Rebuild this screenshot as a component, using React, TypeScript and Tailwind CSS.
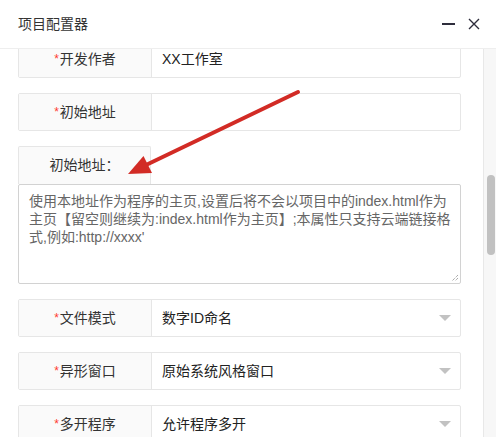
import type { ReactNode } from "react";

const font = {
  fontFamily: '"Liberation Sans", "Noto Sans CJK SC", sans-serif',
};

type RowProps = {
  label: string;
  required?: boolean;
  children?: ReactNode;
  select?: boolean;
};

function FormRow({ label, required = true, children, select }: RowProps) {
  return (
    <div className="mb-[15px] flex h-[38px] rounded-[2px] border border-[#e6e6e6] bg-white">
      <div className="flex w-[133px] shrink-0 items-center justify-center border-r border-[#e6e6e6] bg-[#fafafa] text-[14px] text-[#333]">
        {required && <span className="mr-[1px] text-[12px] text-[#ff3b30]">*</span>}
        {label}
      </div>
      <div className="relative flex flex-1 items-center pl-[10px] text-[14px] text-[#222]">
        {children}
        {select && (
          <span className="absolute right-[9px] top-[15px] h-0 w-0 border-x-[6px] border-t-[6px] border-x-transparent border-t-[#c2c2c2]" />
        )}
      </div>
    </div>
  );
}

export default function App() {
  return (
    <div
      className="relative flex h-[437px] w-[496px] flex-col overflow-hidden bg-white"
      style={font}
    >
      <header className="flex h-[49px] shrink-0 items-center justify-between border-b border-[#eee] pl-[18px] pr-[16px]">
        <span className="text-[14px] text-[#333]">项目配置器</span>
        <div className="flex items-center gap-[13px]">
          <span className="block h-[2px] w-[13px] bg-[#2e2d3c]" />
          <svg width="12" height="12" viewBox="0 0 12 12" aria-hidden="true">
            <path d="M1 1 L11 11 M11 1 L1 11" stroke="#2e2d3c" strokeWidth="1.4" />
          </svg>
        </div>
      </header>

      <div className="flex min-h-0 flex-1">
        <div className="min-w-0 flex-1 overflow-hidden">
          <div className="-mt-[9px] pl-[18px] pr-[22px]">
            <FormRow label="开发作者">XX工作室</FormRow>
            <FormRow label="初始地址" />

            <div className="flex h-[38px] w-[133px] items-center justify-center rounded-t-[2px] border border-b-0 border-[#e6e6e6] bg-[#fafafa] text-[14px] text-[#333]">
              初始地址：
            </div>
            <div className="relative mb-[15px] h-[100px] rounded-[2px] border border-[#d2d2d2] bg-white px-[10px] pt-[7px] text-[14px] leading-[18px] text-[#666]">
              <div className="whitespace-nowrap">
                使用本地址作为程序的主页,设置后将不会以项目中的index.html作为
              </div>
              <div className="whitespace-nowrap">
                主页【留空则继续为:index.html作为主页】;本属性只支持云端链接格
              </div>
              <div className="whitespace-nowrap">式,例如:http://xxxx'</div>
              <svg
                className="absolute bottom-[1px] right-[1px]"
                width="9"
                height="9"
                viewBox="0 0 9 9"
                aria-hidden="true"
              >
                <path d="M8 2 L2 8 M8 5 L5 8" stroke="#888" strokeWidth="1" strokeDasharray="1 1" />
              </svg>
            </div>

            <FormRow label="文件模式" select>
              数字ID命名
            </FormRow>
            <FormRow label="异形窗口" select>
              原始系统风格窗口
            </FormRow>
            <FormRow label="多开程序" select>
              允许程序多开
            </FormRow>
          </div>
        </div>

        <div className="relative w-[13px] shrink-0 border-l border-[#e8e8e8] bg-[#f7f7f7]">
          <div className="absolute left-[3px] top-[126px] h-[80px] w-[8px] rounded-full bg-[#c1c1c1]" />
        </div>
      </div>

      <svg
        className="pointer-events-none absolute left-0 top-0"
        width="496"
        height="437"
        viewBox="0 0 496 437"
        aria-hidden="true"
      >
        <line x1="298" y1="92" x2="146" y2="165" stroke="#d22b25" strokeWidth="4" strokeLinecap="round" />
        <polygon points="128,174 143.5,156 152,173" fill="#d22b25" />
      </svg>
    </div>
  );
}
